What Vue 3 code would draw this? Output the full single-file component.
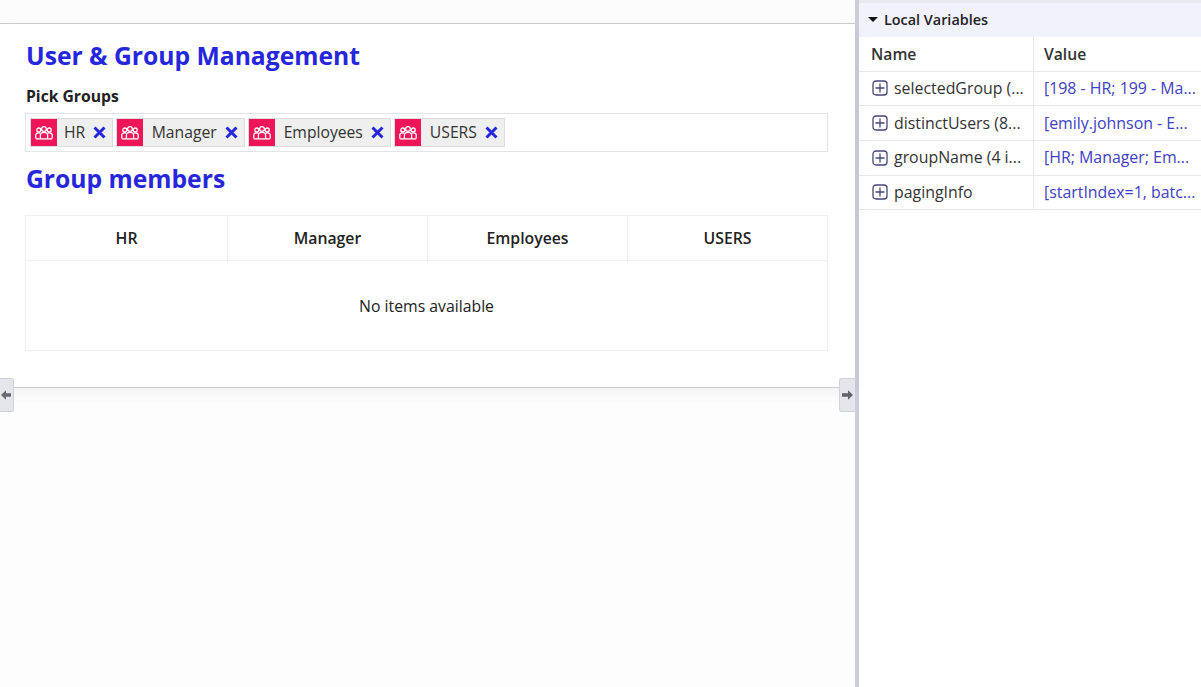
<script setup>
const tags = ['HR', 'Manager', 'Employees', 'USERS']
const cols = ['HR', 'Manager', 'Employees', 'USERS']
const vars = [
  { name: 'selectedGroup (...', value: '[198 - HR; 199 - Ma...' },
  { name: 'distinctUsers (8...', value: '[emily.johnson - E...' },
  { name: 'groupName (4 i...', value: '[HR; Manager; Em...' },
  { name: 'pagingInfo', value: '[startIndex=1, batc...' },
]
</script>

<template>
  <div class="page">
    <div class="main">
      <div class="topbar"></div>
      <section class="content">
        <h1>User &amp; Group Management</h1>
        <div class="label">Pick Groups</div>
        <div class="picker">
          <div v-for="t in tags" :key="t" class="tag">
            <span class="tag-icon">
              <svg width="18" height="14" viewBox="0 0 18 14" fill="none" stroke="#fff" stroke-width="1.3">
                <circle cx="9" cy="3" r="2.4" />
                <circle cx="3.800" cy="4" r="2" />
                <circle cx="14.200" cy="4" r="2" />
                <path d="M5.400 13V9.300C5.400 7.400 7 6.300 9 6.300s3.600 1.100 3.600 3V13" />
                <path d="M.8 12.500V9.100C.8 7.600 2.100 6.800 3.500 6.800c.7 0 1.300.1 1.800.5" />
                <path d="M17.200 12.500V9.100C17.200 7.600 15.900 6.800 14.500 6.800c-.7 0-1.300.1-1.800.5" />
                <path d="M.8 12.900h16.400" />
              </svg>
            </span>
            <span class="tag-text">{{ t }}</span>
            <svg class="tag-x" width="13" height="13" viewBox="0 0 13 13" stroke="#2626dc" stroke-width="3" fill="none">
              <path d="M1.500 1.500l10 10M11.500 1.500l-10 10" />
            </svg>
          </div>
        </div>
        <h2>Group members</h2>
        <div class="grid">
          <div class="grid-head">
            <div v-for="c in cols" :key="c" class="grid-col">{{ c }}</div>
          </div>
          <div class="grid-empty">No items available</div>
        </div>
      </section>
      <button class="handle handle-left" aria-label="Collapse left">
        <svg width="10" height="10" viewBox="0 0 10 10" fill="#666a72"><path d="M0 5l5-4.800v3h5v3.600H5v3z" /></svg>
      </button>
      <button class="handle handle-right" aria-label="Collapse right">
        <svg width="11" height="10" viewBox="0 0 11 10" fill="#5f636b"><path d="M11 5L6 .2v3H0v3.600h6v3z" /></svg>
      </button>
    </div>
    <aside class="panel">
      <div class="panel-title"><span class="caret"></span>Local Variables</div>
      <div class="row row-head">
        <div class="cell cell-name">Name</div>
        <div class="cell cell-value">Value</div>
      </div>
      <div v-for="v in vars" :key="v.name" class="row">
        <div class="cell cell-name">
          <svg class="plus" width="16" height="16" viewBox="0 0 16 16" fill="none" stroke="#45457a" stroke-width="1.300">
            <rect x="1" y="1" width="14" height="14" rx="3" />
            <path d="M8 3.500v9M3.500 8h9" />
          </svg>
          <span>{{ v.name }}</span>
        </div>
        <div class="cell cell-value link">{{ v.value }}</div>
      </div>
    </aside>
  </div>
</template>

<style>
html, body { margin: 0; padding: 0; background: #fff; overflow: hidden; }
</style>

<style scoped>
.page {
  display: flex;
  width: 1201px;
  height: 687px;
  font-family: "Open Sans", sans-serif;
  color: #222;
  overflow: hidden;
}
.main {
  position: relative;
  width: 855px;
  height: 687px;
  background: #fdfdfd;
  flex: none;
}
.topbar {
  height: 23px;
  background: #fcfcfc;
}
.content {
  height: 365px;
  box-sizing: border-box;
  background: #fff;
  border-top: 1px solid #ccc;
  border-bottom: 1px solid #ccc;
  padding: 0 27px 0 25px;
  box-shadow: 0 5px 14px rgba(0, 0, 0, .05);
}
h1, h2 {
  margin: 0;
  padding-left: 1px;
  font-size: 24.67px;
  line-height: 32px;
  font-weight: 700;
  color: #2626dc;
}
h1 { padding-top: 16px; }
.label {
  margin-top: 12px;
  padding-left: 1px;
  font-size: 15.7px;
  line-height: 24px;
  font-weight: 700;
  color: #222;
}
.picker {
  display: flex;
  gap: 3px;
  margin-top: 5px;
  height: 39px;
  box-sizing: border-box;
  padding: 4px;
  border: 1px solid #e4e4e4;
  align-items: flex-start;
}
.tag {
  display: flex;
  align-items: center;
  height: 29px;
  box-sizing: border-box;
  border: 1px solid #ddd;
  background: #efefef;
  font-size: 15.7px;
}
.tag-icon {
  display: flex;
  align-items: center;
  justify-content: center;
  width: 26px;
  height: 27px;
  background: #ee1558;
}
.tag-text {
  margin-left: 8.5px;
  color: #333;
  line-height: 27px;
}
.tag:first-child .tag-text { margin-left: 7px; }
.tag-x { margin: 0 6px 0 8.5px; }
.tag:first-child .tag-x { margin-left: 8px; }
h2 { margin-top: 11px; }
.grid {
  margin-top: 20px;
  height: 136px;
  box-sizing: border-box;
  border: 1px solid #eee;
}
.grid-head {
  display: grid;
  grid-template-columns: 201px 200px 200px 1fr;
  height: 45px;
  box-sizing: border-box;
  border-bottom: 1px solid #f0f0f0;
}
.grid-col {
  display: flex;
  align-items: center;
  justify-content: center;
  font-size: 15.8px;
  font-weight: 600;
  color: #222;
  border-left: 1px solid #eee;
}
.grid-col:first-child { border-left: 0; }
.grid-empty {
  height: 89px;
  display: flex;
  align-items: center;
  justify-content: center;
  font-size: 15.8px;
  color: #222;
}
.handle {
  position: absolute;
  top: 378px;
  height: 34px;
  padding: 0;
  box-sizing: border-box;
  display: flex;
  align-items: center;
  justify-content: center;
  background: #e5e6ec;
  border: 1px solid #cfd0d8;
}
.handle-left {
  left: 0;
  width: 14px;
  border-left: 0;
  border-radius: 0 3px 3px 0;
  justify-content: flex-start;
  padding-left: 1px;
}
.handle-right {
  right: 0;
  width: 16px;
  border-right: 0;
  border-radius: 3px 0 0 3px;
}
.panel {
  flex: none;
  width: 346px;
  height: 687px;
  box-sizing: border-box;
  border-left: 4px solid #cbcdd9;
  background: #fff;
  overflow: hidden;
}
.panel-title {
  display: flex;
  align-items: center;
  height: 37px;
  padding: 0 0 1px 9px;
  box-sizing: border-box;
  background: #f2f2fd;
  border-top: 3px solid #e8e9ef;
  font-size: 14.4px;
  font-weight: 600;
  color: #222;
}
.caret {
  width: 0;
  height: 0;
  margin-right: 6px;
  border-left: 5px solid transparent;
  border-right: 5px solid transparent;
  border-top: 5px solid #111;
}
.row {
  display: flex;
  height: 34.67px;
  box-sizing: border-box;
  border-bottom: 1px solid #e8e8e8;
  font-size: 15.9px;
  color: #333;
}
.row-head { font-weight: 600; }
.row-head .cell { font-size: 15.7px; color: #333; padding-bottom: 0; }
.cell {
  box-sizing: border-box;
  display: flex;
  align-items: center;
  white-space: nowrap;
  overflow: hidden;
  padding-bottom: 1px;
}
.cell-name {
  width: 175px;
  padding-left: 12px;
  border-right: 1px solid #e8e8e8;
}
.cell-value { flex: 1; padding-left: 10px; }
.plus { flex: none; margin: 1px 6px 0 1px; }
.link { color: #4040c4; }
</style>
